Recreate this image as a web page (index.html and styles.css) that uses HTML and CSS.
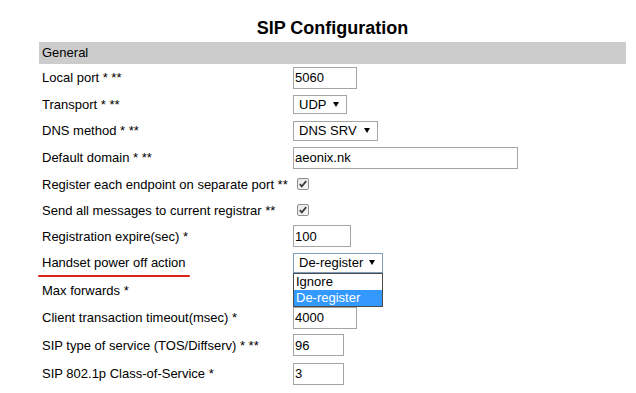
FILE: index.html
```html
<!DOCTYPE html>
<html>
<head>
<meta charset="utf-8">
<title>SIP Configuration</title>
<link rel="stylesheet" href="styles.css">
</head>
<body>
<div class="page">
  <h1 class="title">SIP Configuration</h1>
  <div class="section">General</div>
  <div class="form">
    <div class="row h27">
      <div class="label">Local port * **</div>
      <div class="field"><input class="text w64" value="5060" readonly></div>
    </div>
    <div class="row h26">
      <div class="label">Transport * **</div>
      <div class="field"><div class="select w54 h18"><span>UDP</span><svg class="arrow" width="6" height="5" viewBox="0 0 6 5"><polygon points="0,0 6,0 3,5" fill="#000"/></svg></div></div>
    </div>
    <div class="row h27">
      <div class="label">DNS method * **</div>
      <div class="field"><div class="select w85"><span>DNS SRV</span><svg class="arrow" width="6" height="5" viewBox="0 0 6 5"><polygon points="0,0 6,0 3,5" fill="#000"/></svg></div></div>
    </div>
    <div class="row h27">
      <div class="label">Default domain * **</div>
      <div class="field"><input class="text w225" value="aeonix.nk" readonly></div>
    </div>
    <div class="row h26">
      <div class="label">Register each endpoint on separate port **</div>
      <div class="field"><span class="check"><svg width="12" height="12" viewBox="0 0 12 12"><defs><linearGradient id="cb1" x1="0" y1="0" x2="1" y2="1"><stop offset="0" stop-color="#e6e6e6"/><stop offset="1" stop-color="#f8f8f8"/></linearGradient></defs><rect x="0.5" y="0.5" width="11" height="11" rx="1.5" fill="url(#cb1)" stroke="#8e8f8f"/><path d="M2.8 6.2 L4.8 8.4 L9.2 3.2" fill="none" stroke="#3b3b3b" stroke-width="1.8"/></svg></span></div>
    </div>
    <div class="row h26">
      <div class="label">Send all messages to current registrar **</div>
      <div class="field"><span class="check"><svg width="12" height="12" viewBox="0 0 12 12"><rect x="0.5" y="0.5" width="11" height="11" rx="1.5" fill="url(#cb1)" stroke="#8e8f8f"/><path d="M2.8 6.2 L4.8 8.4 L9.2 3.2" fill="none" stroke="#3b3b3b" stroke-width="1.8"/></svg></span></div>
    </div>
    <div class="row h26">
      <div class="label">Registration expire(sec) *</div>
      <div class="field"><input class="text w58" value="100" readonly></div>
    </div>
    <div class="row h27 marked">
      <div class="label">Handset power off action</div>
      <div class="field">
        <div class="dropwrap">
          <div class="select w90 focus"><span>De-register</span><svg class="arrow" width="6" height="5" viewBox="0 0 6 5"><polygon points="0,0 6,0 3,5" fill="#000"/></svg></div>
          <ul class="options">
            <li>Ignore</li>
            <li class="selected">De-register</li>
          </ul>
        </div>
      </div>
      <div class="redline"></div>
    </div>
    <div class="row h28">
      <div class="label">Max forwards *</div>
      <div class="field"><input class="text w51" value="70" readonly></div>
    </div>
    <div class="row h27">
      <div class="label">Client transaction timeout(msec) *</div>
      <div class="field"><input class="text w64" value="4000" readonly></div>
    </div>
    <div class="row h28">
      <div class="label">SIP type of service (TOS/Diffserv) * **</div>
      <div class="field"><input class="text w51" value="96" readonly></div>
    </div>
    <div class="row h29">
      <div class="label">SIP 802.1p Class-of-Service *</div>
      <div class="field"><input class="text w51" value="3" readonly></div>
    </div>
  </div>
</div>
</body>
</html>
```

FILE: styles.css
```css
* { box-sizing: border-box; }
html, body {
  margin: 0;
  padding: 0;
  background: #fff;
}
body {
  font-family: "Liberation Sans", Arial, sans-serif;
  font-size: 13px;
  color: #000;
  overflow: hidden;
}
.page {
  margin-left: 39px;
  width: 587px;
}
.title {
  margin: 0 0 3px 0;
  padding-top: 17px;
  font-size: 18px;
  line-height: 22px;
  font-weight: bold;
  text-align: center;
}
.section {
  background: #cccccc;
  height: 22px;
  line-height: 22px;
  padding-left: 3px;
}
.form {
  display: flex;
  flex-direction: column;
}
.row {
  display: grid;
  grid-template-columns: 254px 1fr;
  align-items: center;
  position: relative;
}
.h26 { height: 26px; }
.h27 { height: 27px; }
.h28 { height: 28px; }
.h29 { height: 29px; }
.label {
  padding-left: 3px;
  white-space: nowrap;
}
.field {
  display: flex;
  align-items: center;
}
.text {
  font-family: "Liberation Sans", Arial, sans-serif;
  font-size: 13px;
  color: #000;
  height: 22px;
  border: 1px solid #a5a5a5;
  padding: 0 0 0 1px;
  margin: 0;
  background: #fff;
  outline: none;
}
.w51 { width: 51px; }
.w58 { width: 58px; }
.w64 { width: 64px; }
.w225 { width: 225px; }
.select {
  display: flex;
  align-items: center;
  justify-content: space-between;
  height: 20px;
  border: 1px solid #a5a5a5;
  padding: 0 7px 0 5px;
  background: #fff;
  white-space: nowrap;
}
.select.h18 { height: 19px; }
.select.focus {
  height: 20px;
  border-color: #7f9db9;
}
.w54 { width: 54px; }
.w85 { width: 85px; }
.w90 { width: 90px; }
.arrow { display: block; flex: none; }
.check {
  display: block;
  margin-left: 4px;
  width: 12px;
  height: 12px;
}
.check svg { display: block; }
.dropwrap {
  position: relative;
}
.options {
  position: absolute;
  left: 0;
  top: 100%;
  width: 90px;
  margin: 0;
  padding: 0;
  list-style: none;
  background: #fff;
  border: 1px solid #4b4b4b;
  z-index: 5;
}
.options li {
  height: 16px;
  line-height: 16px;
  padding-left: 2px;
}
.options li.selected {
  background: #3399ff;
  color: #fff;
}
.redline {
  position: absolute;
  left: -1px;
  bottom: -1px;
  width: 152px;
  height: 2px;
  background: #d8231b;
  border-radius: 1px;
}
```
